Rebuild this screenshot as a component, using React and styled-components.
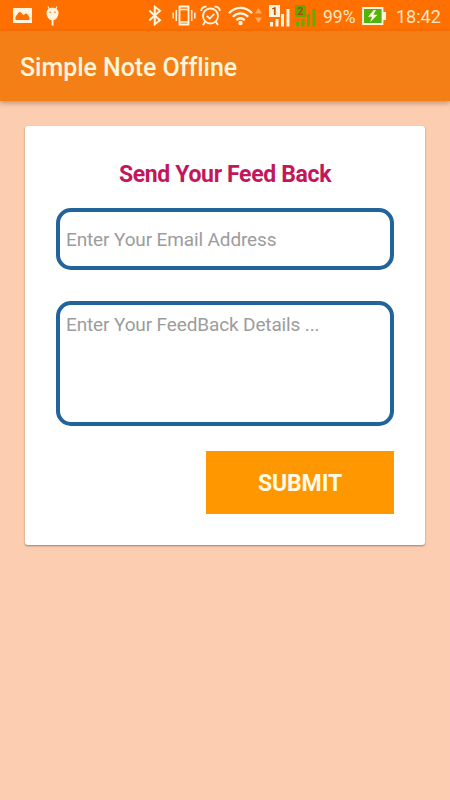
import React from "react";
import styled, { createGlobalStyle } from "styled-components";

const GlobalStyle = createGlobalStyle`
    * {
        box-sizing: border-box;
    }

    body {
        margin: 0;
        background-color: #fdcdb2;
        font-family: Roboto, "Liberation Sans", sans-serif;
        font-variant-ligatures: none;
    }
`;

const Screen = styled.div`
    min-height: 800px;
    background-color: #fdcdb2;
`;

const StatusBar = styled.div`
    height: 31px;
    padding: 0 10px 0 13px;
    display: flex;
    align-items: center;
    justify-content: space-between;
    background-color: #ff7000;
`;

const StatusGroup = styled.div`
    display: flex;
    align-items: center;
`;

const Icon = styled.svg`
    display: block;
    flex: none;
    margin-left: ${({ $gap = 0 }) => $gap}px;
    fill: none;
    color: #fff4e0;
`;

const StatusText = styled.span`
    width: ${({ $width }) => $width}px;
    margin-left: ${({ $gap }) => $gap}px;
    padding-top: 2px;
    font-size: ${({ $size }) => $size}px;
    line-height: 22px;
    white-space: nowrap;
    color: #ffe6c4;
`;

const AppBar = styled.header`
    position: relative;
    height: 70px;
    padding: 4px 20px 0;
    display: flex;
    align-items: center;
    background-color: #f57f17;
    box-shadow: 0 2px 5px rgba(90, 50, 20, 0.4);
`;

const AppTitle = styled.h1`
    margin: 0;
    font-size: 25px;
    font-weight: 500;
    line-height: 30px;
    letter-spacing: -0.05px;
    color: #fff6dc;
`;

const Card = styled.form`
    margin: 25px 25px 0;
    height: 419px;
    padding: 33px 31px 0;
    display: flex;
    flex-direction: column;
    border-radius: 3px;
    background-color: #fff;
    box-shadow: 0 1px 2px rgba(80, 50, 20, 0.5);
`;

const CardTitle = styled.h2`
    margin: 0 0 17px;
    font-size: 23px;
    font-weight: 700;
    line-height: 32px;
    letter-spacing: -0.35px;
    text-align: center;
    color: #c2185b;
`;

const Field = styled.input`
    width: 100%;
    height: ${({ $height }) => $height}px;
    margin: 0 0 ${({ $bottom }) => $bottom}px;
    padding: ${({ $top = 0 }) => $top}px 7px 0 6px;
    border: 4px solid #21639a;
    border-radius: 15px;
    outline: none;
    resize: none;
    background-color: #fff;
    font-family: inherit;
    font-size: 19px;
    line-height: 24px;
    letter-spacing: -0.13px;

    &::placeholder {
        color: #9c9c9c;
        opacity: 1;
    }
`;

const SubmitButton = styled.button`
    align-self: flex-end;
    width: 188px;
    height: 63px;
    padding: 2px 0 0;
    border: 0;
    background-color: #ff9800;
    font-family: inherit;
    font-size: 23px;
    font-weight: 700;
    letter-spacing: -0.1px;
    color: #fffbe8;
`;

const PictureIcon = () => (
    <Icon width="19" height="15" viewBox="0 0 19 15">
        <path fill="currentColor" fillRule="evenodd" d="M0 0h19v15H0zM2.500 12h14V9.500C15.500 8 14.500 5.500 13 5.500c-1.200 0-1.500 1.500-2.500 1.500S8.500 4 7 4C5 4 4 7.500 2.500 9z" />
    </Icon>
);

const DroidIcon = () => (
    <Icon $gap={14} width="13" height="20" viewBox="0 0 13 20">
        <path stroke="currentColor" strokeWidth="1.200" d="M2 .5 3.500 3.500M11 .5 9.500 3.500" />
        <path fill="currentColor" d="M6.500 1.800c3.500 0 6 2.200 6 5.200S10 14.500 6.500 14.500.5 10 .5 7s2.500-5.200 6-5.200zM5.600 14h1.900v5.500H5.600z" />
        <circle cx="4" cy="6.300" r=".8" fill="#ff7000" />
        <circle cx="9" cy="6.300" r=".8" fill="#ff7000" />
    </Icon>
);

const BluetoothIcon = () => (
    <Icon width="14" height="21" viewBox="0 0 14 21">
        <path stroke="currentColor" strokeWidth="2" d="M1.200 5.500 12 15.200 6.800 19.200V1.800L12 5.800 1.200 15.500" />
    </Icon>
);

const VibrateIcon = () => (
    <Icon $gap={10} width="24" height="21" viewBox="0 0 24 21">
        <path stroke="currentColor" strokeWidth="1.800" d="M7.500 1.500h9v18h-9z" />
        <path stroke="currentColor" strokeWidth="1.500" d="M7.500 4.500h9M7.500 17h9M4.300 5v11M19.700 5v11M1.200 7.500v6M22.800 7.500v6" />
    </Icon>
);

const AlarmIcon = () => (
    <Icon $gap={4} width="21" height="21" viewBox="0 0 21 21">
        <circle cx="10.500" cy="11" r="7.500" stroke="currentColor" strokeWidth="1.800" />
        <path stroke="currentColor" strokeWidth="1.800" d="m6.800 10.800 3 2.800 4.500-4.800M5 17l-2 3M16 17l2 3" />
        <path stroke="currentColor" strokeWidth="1.800" d="M1.200 6C1 3.500 3.500 1.200 6.500 1.600M19.800 6C20 3.500 17.500 1.200 14.500 1.600" />
    </Icon>
);

const WifiIcon = () => (
    <Icon $gap={7} width="25" height="20" viewBox="0 0 25 20">
        <path stroke="currentColor" strokeWidth="2.300" d="M1 7.200c6.500-7 16.500-7 23 0M4.800 10.800c4.500-4.600 10.900-4.600 15.400 0M8.300 14.200c2.600-2.500 5.800-2.500 8.400 0" />
        <circle cx="12.500" cy="17" r="2.200" fill="currentColor" />
    </Icon>
);

const TrafficIcon = () => (
    <Icon $gap={2} width="7" height="15" viewBox="0 0 7 15">
        <path fill="#ffab62" d="M3.500 0 7 5.500H0zM3.500 15 0 9.500h7z" />
    </Icon>
);

const SimLabel = styled.text`
    font-size: 11px;
    font-weight: 700;
    text-anchor: middle;
    fill: #b04a00;
`;

const SignalIcon = ({ sim, color, gap }) => (
    <Icon $gap={gap} width="22" height="22" viewBox="0 0 22 22">
        <path fill={color} d="M0 0h11v12H0zM1 17h3v4.500H1zM6.500 14h3v7.500h-3zM12 9h3v12.500h-3zM17.500 4h3v17.500h-3z" />
        <SimLabel x="5.500" y="10">{sim}</SimLabel>
    </Icon>
);

const BatteryIcon = () => (
    <Icon $gap={6} width="25" height="18" viewBox="0 0 25 18">
        <path fill="#51b30d" stroke="currentColor" strokeWidth="1.800" d="M1 1h19.500v16H1z" />
        <path fill="currentColor" d="M21 5h3v8h-3zM11.800 3 6 9.800h4L8.200 15l7.300-7.200h-4.200L14 3z" />
    </Icon>
);

const App = () => (
    <>
        <GlobalStyle />
        <Screen>
            <StatusBar>
                <StatusGroup>
                    <PictureIcon />
                    <DroidIcon />
                </StatusGroup>
                <StatusGroup>
                    <BluetoothIcon />
                    <VibrateIcon />
                    <AlarmIcon />
                    <WifiIcon />
                    <TrafficIcon />
                    <SignalIcon sim="1" color="#fff4e0" gap={7} />
                    <SignalIcon sim="2" color="#65a900" gap={4} />
                    <StatusText $width={33} $gap={6} $size={17.5}>99%</StatusText>
                    <BatteryIcon />
                    <StatusText $width={44} $gap={9} $size={18}>18:42</StatusText>
                </StatusGroup>
            </StatusBar>
            <AppBar>
                <AppTitle>Simple Note Offline</AppTitle>
            </AppBar>
            <Card>
                <CardTitle>Send Your Feed Back</CardTitle>
                <Field $height={62} $bottom={31} placeholder="Enter Your Email Address" />
                <Field as="textarea" $height={125} $bottom={25} $top={8} placeholder="Enter Your FeedBack Details ..." />
                <SubmitButton type="button">SUBMIT</SubmitButton>
            </Card>
        </Screen>
    </>
);

export default App;
